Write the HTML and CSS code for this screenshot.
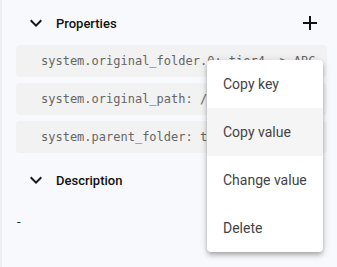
FILE: index.html
```html
<!DOCTYPE html>
<html lang="en">
<head>
    <meta charset="UTF-8">
    <meta name="viewport" content="width=device-width, initial-scale=1.0">
    <title>Properties</title>
    <link rel="stylesheet" href="styles.css">
</head>
<body>
    <div class="panel">
        <div class="section-header">
            <svg class="chevron" width="24" height="24" viewBox="0 0 24 24"><path d="M16.59 8.59L12 13.17 7.41 8.59 6 10l6 6 6-6z"/></svg>
            <span class="title">Properties</span>
            <svg class="add" width="24" height="24" viewBox="0 0 24 24"><path d="M19 13h-6v6h-2v-6H5v-2h6V5h2v6h6v2z"/></svg>
        </div>

        <div class="props">
            <div class="prop">system.original_folder.0: tier4 -&gt; ABC</div>
            <div class="prop">system.original_path: /tier4/ABC/inbox</div>
            <div class="prop">system.parent_folder: tier4</div>
        </div>

        <div class="section-header desc">
            <svg class="chevron" width="24" height="24" viewBox="0 0 24 24"><path d="M16.59 8.59L12 13.17 7.41 8.59 6 10l6 6 6-6z"/></svg>
            <span class="title">Description</span>
        </div>
        <div class="description">-</div>
    </div>

    <div class="menu">
        <div class="menu-item">Copy key</div>
        <div class="menu-item active">Copy value</div>
        <div class="menu-item">Change value</div>
        <div class="menu-item">Delete</div>
    </div>
</body>
</html>
```

FILE: styles.css
```css
html, body {
    margin: 0;
    padding: 0;
    height: 100%;
}
body {
    font-family: Roboto, 'Noto Sans', sans-serif;
    background-color: #f8f9fc;
    border-left: 2px solid #eceef2;
    box-sizing: border-box;
    overflow: hidden;
}
.panel {
    padding: 7px 10px 0 14px;
}
.section-header {
    display: flex;
    align-items: center;
    height: 32px;
    padding-left: 8px;
    padding-right: 5px;
}
.section-header .chevron {
    fill: #1a1a1a;
    margin-right: 8px;
}
.section-header .title {
    flex: 1;
    font-size: 13px;
    font-weight: 500;
    color: #111;
}
.section-header .add {
    fill: #111;
}
.props {
    display: flex;
    flex-direction: column;
    gap: 6px;
    margin-top: 6px;
}
.prop {
    height: 32px;
    line-height: 33px;
    background-color: #f2f2f2;
    border-radius: 4px;
    padding-left: 25px;
    font-family: 'DejaVu Sans Mono', monospace;
    font-size: 12px;
    color: #666;
    white-space: nowrap;
    overflow: hidden;
}
.desc {
    margin-top: 11px;
}
.description {
    margin-top: 16px;
    padding-left: 1px;
    font-size: 13px;
    line-height: 20px;
    color: #222;
}
.menu {
    position: absolute;
    left: 207px;
    top: 60px;
    width: 116px;
    background-color: #fff;
    border-radius: 4px;
    box-shadow: 0 2px 4px -1px rgba(0,0,0,.2), 0 4px 5px 0 rgba(0,0,0,.14), 0 1px 10px 0 rgba(0,0,0,.12);
    overflow: hidden;
}
.menu-item {
    height: 48px;
    line-height: 48px;
    padding-left: 16px;
    font-size: 14px;
    color: #444;
}
.menu-item.active {
    background-color: #f5f5f5;
}
```
